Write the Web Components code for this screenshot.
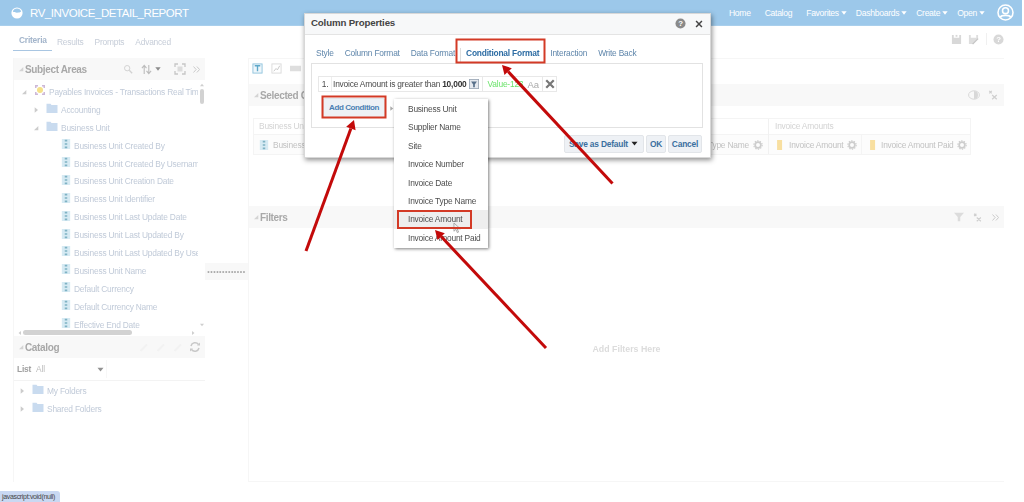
<!DOCTYPE html>
<html>
<head>
<meta charset="utf-8">
<title>RV_INVOICE_DETAIL_REPORT</title>
<style>
  html, body { margin: 0; height: 100%; background: #fff; overflow: hidden; }
</style>
</head>
<body>
<rv-app></rv-app>
<script>
// small icon set, all drawn on a 12x12 box
const ICONS = {
  logo: '<circle cx="6" cy="6" r="5.6" fill="#fff"/><path d="M1.8 4.6c2 1.6 6.4 1.6 8.4 0-.6-1.9-2.2-3-4.2-3s-3.600 1.100-4.200 3z" fill="#9cc8ea"/>',
  user: '<circle cx="6" cy="6" r="5.300" fill="none" stroke="#fff" stroke-width="1.100"/><circle cx="6" cy="4.700" r="2.100" fill="none" stroke="#fff" stroke-width="1.100"/><path d="M2.300 9.300c1-1.700 6.400-1.700 7.400 0" fill="none" stroke="#fff" stroke-width="1.300"/>',
  caret: '<path d="M2 3.500h8l-4 5z" fill="currentColor"/>',
  right: '<path d="M4 2l5 4-5 4z" fill="currentColor"/>',
  corner: '<path d="M9.500 3v6.500H3z" fill="currentColor"/>',
  folder: '<path d="M.5 3V1.800h4L5.500 3h6v8H.5z" fill="#c9dbef"/>',
  subject: '<path d="M1 1h3v1.500H2.500V4H1zM8 1h3v3H9.500V2.500H8zM1 8h1.500v1.500H4V11H1zM9.500 8H11v3H8V9.500h1.500z" fill="#cdb8d8"/><circle cx="6" cy="6" r="3" fill="#f5e08a"/>',
  column: '<rect x="1" y="0" width="10" height="12" fill="#d6eaf3"/><path d="M4.500 1h3v2h-3zM4.500 5h3v2h-3zM4.500 9h3v2h-3z" fill="#7fb2c4"/>',
  measure: '<rect x="2.500" y="0" width="6" height="12" fill="#f8dfa0"/>',
  gear: '<circle cx="6" cy="6" r="3.400" fill="none" stroke="#cdcdcd" stroke-width="2"/><circle cx="6" cy="6" r="5" fill="none" stroke="#cdcdcd" stroke-width="1.400" stroke-dasharray="1.600 1.540"/>',
  search: '<circle cx="5" cy="5" r="3.200" fill="none" stroke="#d2d2d2" stroke-width="1.200"/><path d="M7.500 7.500l3.500 3.500" stroke="#d2d2d2" stroke-width="1.600"/>',
  sort: '<path d="M3.500 11V2M1 4.500l2.500-3 2.500 3M8.500 1v9M6 7.500l2.500 3 2.500-3" fill="none" stroke="#bcbcbc" stroke-width="1.200"/>',
  select: '<path d="M1 4V1h3M8 1h3v3M11 8v3H8M4 11H1V8" fill="none" stroke="#c6c6c6" stroke-width="1.300"/><rect x="3.500" y="3.500" width="5" height="5" fill="#dcdcdc"/>',
  chevrons: '<path d="M2 2l3.500 4L2 10M6.500 2L10 6l-3.500 4" fill="none" stroke="#c6c6c6" stroke-width="1.200"/>',
  save: '<path d="M1 1h2v3h6V1h2v10H1z" fill="#d8d8d8"/><rect x="5" y="1" width="2" height="2" fill="#d8d8d8"/>',
  saveas: '<path d="M1 1h2v3h6V1h2v4L6 11H1z" fill="#dedede"/><path d="M5 11l6-6" stroke="#c6c6c6" stroke-width="1.400"/>',
  help: '<circle cx="6" cy="6" r="5.500" fill="currentColor"/><text x="6" y="9" text-anchor="middle" font-family="Liberation Sans" font-size="8.500" font-weight="700" fill="#fff">?</text>',
  close: '<path d="M2.500 2.500l7 7M9.500 2.500l-7 7" stroke="currentColor" stroke-width="1.800"/>',
  bigx: '<path d="M1.500 1.500l9 9M10.500 1.500l-9 9" stroke="#777" stroke-width="2.600"/>',
  filterbox: '<rect x=".5" y=".5" width="11" height="11" fill="#e4e8ee" stroke="#9aa7b5"/><path d="M2.500 3h7L7 6.500V10H5V6.500z" fill="#58708a"/>',
  prompt: '<rect x="1" y="1" width="10" height="10" fill="#eef6fb" stroke="#8fc3dc"/><path d="M3 3h6M6 3v6" stroke="#5ea8c9" stroke-width="1.500"/>',
  results: '<rect x="1" y="1" width="10" height="10" fill="#fff" stroke="#dadada"/><path d="M3 9l2.500-3 1.500 1.500L9.500 3" fill="none" stroke="#c4c4c4"/>',
  bar: '<rect x="0" y="3" width="12" height="6" fill="#dedede"/>',
  eye: '<ellipse cx="6" cy="6" rx="5.400" ry="4.200" fill="none" stroke="#d8d8d8"/><path d="M6 2v8a4 4 0 0 0 0-8z" fill="#d8d8d8"/>',
  clearx: '<path d="M1.500 1l3 3M4.500 1l-3 3M5 6l5.500 5M10.500 6L5 11" stroke="#cfcfcf" stroke-width="1.500"/>',
  funnel: '<path d="M0 1h12L7.500 6v5h-3V6z" fill="#dcdcdc"/>',
  refresh: '<path d="M2 5a4.200 4.200 0 0 1 7.500-1.500M10 7a4.200 4.200 0 0 1-7.500 1.500" fill="none" stroke="#c8c8c8" stroke-width="1.500"/><path d="M8 4.500h3v-3zM4 7.500H1v3z" fill="#c8c8c8"/>',
  faint: '<path d="M2 9l7-7 1.500 1.500-7 7z" fill="#f2f2f2"/>',
  cursor: '<path d="M1 0v9l2.200-2 1.500 3.500 1.400-.6L4.700 6.500 8 6.300z" fill="#eee" stroke="#8a8a8a" stroke-width=".7"/>'
};

class RvIcon extends HTMLElement {
  constructor () {
    super();
    const size = this.getAttribute('size') || 12;
    this.attachShadow({mode: 'open'}).innerHTML = `
      <style>
        :host { display: inline-flex; flex: none; width: ${size}px; height: ${size}px; }
        svg { width: 100%; height: 100%; display: block; }
      </style>
      <svg viewBox="0 0 12 12">${ICONS[this.getAttribute('name')] || ''}</svg>`;
  }
}
customElements.define('rv-icon', RvIcon);

class RvHeader extends HTMLElement {
  constructor () {
    super();
    const links = [['Home'], ['Catalog'], ['Favorites', 1], ['Dashboards', 1], ['Create', 1], ['Open', 1]];
    this.attachShadow({mode: 'open'}).innerHTML = `
      <style>
        :host { display: flex; align-items: center; height: 26px; width: 1022px; background: #9cc8ea; color: #fff; font: 8.600px "Liberation Sans", sans-serif; letter-spacing: -.3px; box-sizing: border-box; padding: 0 8px 0 11px; border-bottom: 1px solid #a9cfec; }
        .title { font-size: 11.500px; margin-left: 7px; letter-spacing: -.45px; }
        nav { margin-left: auto; display: flex; align-items: center; gap: 14px; }
        span.l { display: flex; align-items: center; gap: 1px; }
        span.l rv-icon { margin-right: -6px; }
        .me { margin-left: 3px; }
      </style>
      <rv-icon name="logo"></rv-icon>
      <span class="title">RV_INVOICE_DETAIL_REPORT</span>
      <nav>
        ${links.map(l => `<span class="l">${l[0]}${l[1] ? '<rv-icon name="caret" size="8"></rv-icon>' : ''}</span>`).join('')}
        <rv-icon class="me" name="user" size="17"></rv-icon>
      </nav>`;
  }
}
customElements.define('rv-header', RvHeader);

class RvTabs extends HTMLElement {
  constructor () {
    super();
    this.attachShadow({mode: 'open'}).innerHTML = `
      <style>
        :host { display: flex; align-items: flex-end; height: 25px; box-sizing: border-box; margin: 0 20px 7px 13px; font: 8.400px "Liberation Sans", sans-serif; letter-spacing: -.2px; color: #c6cdd8; }
        .tab { padding: 0 0 3px; margin-right: 11px; height: 12px; line-height: 12px; }
        .on { color: #a3b5cb; font-weight: 700; border-bottom: 1px solid #a9c6e2; padding: 0 2px 4px 6px; width: 31px; margin-right: 5px; }
        .tools { margin-left: auto; display: flex; align-items: center; gap: 6px; padding-bottom: 6px; }
        .sep { width: 1px; height: 12px; background: #f0f0f0; margin-left: 1.500px; }
      </style>
      <span class="tab on">Criteria</span><span class="tab">Results</span><span class="tab">Prompts</span><span class="tab">Advanced</span>
      <span class="tools"><rv-icon name="save" size="11"></rv-icon><rv-icon name="saveas" size="11"></rv-icon><span class="sep"></span><rv-icon name="help" size="11" style="color:#d8d8d8"></rv-icon></span>`;
  }
}
customElements.define('rv-tabs', RvTabs);

class RvPanel extends HTMLElement {
  constructor () {
    super();
    this.attachShadow({mode: 'open'}).innerHTML = `
      <style>
        :host { display: block; }
        .bar { display: flex; align-items: center; height: 22px; background: #f8f8f8; padding: 0 4px 0 3px; font: 700 10px "Liberation Sans", sans-serif; letter-spacing: -.35px; color: #a8a8a8; }
        .tools { margin-left: auto; display: flex; align-items: center; gap: 6px; }
        rv-icon { color: #d4d4d4; }
      </style>
      <div class="bar"><rv-icon name="corner" size="8"></rv-icon><span>${this.getAttribute('title')}</span><div class="tools"><slot name="tools"></slot></div></div>
      <slot></slot>`;
  }
}
customElements.define('rv-panel', RvPanel);

class RvRow extends HTMLElement {
  constructor () {
    super();
    const indent = this.getAttribute('indent') || 0;
    const twist = this.getAttribute('twist');
    this.attachShadow({mode: 'open'}).innerHTML = `
      <style>
        :host { display: flex; align-items: center; height: 17.900px; padding-left: ${indent}px; white-space: nowrap; color: #c0cad8; font: 8.400px "Liberation Sans", sans-serif; letter-spacing: -.2px; }
        rv-icon { color: #cccccc; }
        .ic { margin: -3px 0 0 6px; }
        .t { margin-left: 3px; }
      </style>
      ${twist ? `<rv-icon name="${twist}" size="8"></rv-icon>` : ''}
      <rv-icon class="ic" name="${this.getAttribute('icon')}" size="${this.getAttribute('isize') || 12}"></rv-icon>
      <span class="t"><slot></slot></span>`;
  }
}
customElements.define('rv-row', RvRow);

class RvSubject extends HTMLElement {
  constructor () {
    super();
    const cols = ['Business Unit Created By', 'Business Unit Created By Username', 'Business Unit Creation Date', 'Business Unit Identifier', 'Business Unit Last Update Date', 'Business Unit Last Updated By', 'Business Unit Last Updated By User', 'Business Unit Name', 'Default Currency', 'Default Currency Name', 'Effective End Date'];
    this.attachShadow({mode: 'open'}).innerHTML = `
      <style>
        :host { display: block; position: relative; }
        .tree { height: 249px; padding: 3px 0 0 0; width: 178px; overflow: hidden; box-sizing: border-box; margin-left: 6px; }
        .hs { height: 7px; margin: 0 9px 0 3px; display: flex; align-items: center; color: #cfcfcf; }
        .thumb { width: 109px; height: 5px; border-radius: 3px; background: #d2d2d2; margin: 0 auto 0 0; }
        .vs { position: absolute; right: 1px; top: 2px; width: 5px; height: 246px; color: #cfcfcf; display: flex; flex-direction: column; align-items: center; }
        .vs b { width: 4px; height: 15px; border-radius: 2px; background: #d2d2d2; margin: 1px 0 auto; }
      </style>
      <div class="tree">
        <rv-row twist="corner" icon="subject">Payables Invoices - Transactions Real Time</rv-row>
        <rv-row indent="12" twist="right" icon="folder">Accounting</rv-row>
        <rv-row indent="12" twist="corner" icon="folder">Business Unit</rv-row>
        ${cols.map(c => `<rv-row indent="35" icon="column" isize="10">${c}</rv-row>`).join('')}
      </div>
      <div class="vs"><rv-icon name="caret" size="6" style="transform:scaleY(-1)"></rv-icon><b></b><rv-icon name="caret" size="6"></rv-icon></div>
      <div class="hs"><rv-icon name="right" size="6" style="transform:scaleX(-1)"></rv-icon><div class="thumb"></div><rv-icon name="right" size="6"></rv-icon></div>`;
  }
}
customElements.define('rv-subject', RvSubject);

class RvCatalog extends HTMLElement {
  constructor () {
    super();
    this.attachShadow({mode: 'open'}).innerHTML = `
      <style>
        :host { display: block; font: 8.400px "Liberation Sans", sans-serif; letter-spacing: -.2px; color: #c0cad8; }
        .list { display: flex; align-items: center; height: 22px; border-bottom: 1px solid #f3f3f3; padding-left: 3px; }
        .list b { color: #a0a0a0; }
        .sel { width: 71px; margin-left: 5px; height: 18px; line-height: 18px; display: flex; align-items: center; justify-content: space-between; color: #bdbdbd; border-right: 1px solid #f7f7f7; padding-right: 1px; box-sizing: border-box; }
        .sel rv-icon { color: #929292; }
        .tree { padding: 1px 0 0 0; margin-left: 1px; }
      </style>
      <div class="list"><b>List</b><div class="sel">All<rv-icon name="caret" size="9"></rv-icon></div></div>
      <div class="tree">
        <rv-row indent="3" twist="right" icon="folder">My Folders</rv-row>
        <rv-row indent="3" twist="right" icon="folder">Shared Folders</rv-row>
      </div>`;
  }
}
customElements.define('rv-catalog', RvCatalog);

class RvColumn extends HTMLElement {
  constructor () {
    super();
    this.attachShadow({mode: 'open'}).innerHTML = `
      <style>
        :host { display: flex; align-items: center; height: 19px; gap: 4px; color: #c2c2c2; font: 8.400px "Liberation Sans", sans-serif; letter-spacing: -.2px; white-space: nowrap; box-sizing: border-box; }
      </style>
      <rv-icon name="${this.getAttribute('icon') || 'column'}" size="10"></rv-icon><slot></slot><rv-icon name="gear" size="10"></rv-icon>`;
  }
}
customElements.define('rv-column', RvColumn);

class RvColumns extends HTMLElement {
  constructor () {
    super();
    this.attachShadow({mode: 'open'}).innerHTML = `
      <style>
        :host { display: flex; width: 718px; margin: 12px 0 0 4px; border: 1px solid #f4f4f4; box-sizing: border-box; font: 8.400px "Liberation Sans", sans-serif; letter-spacing: -.2px; color: #d3d3d3; }
        .g { display: flex; flex-direction: column; }
        .g + .g { border-left: 1px solid #f1f1f1; }
        .a { width: 515px; }
        .b { flex: 1; }
        .h { height: 15px; line-height: 15px; padding-left: 5px; border-bottom: 1px solid #f4f4f4; }
        .b .h { padding-left: 6px; }
        .c { display: flex; justify-content: space-between; padding: 0 5px; background: #fcfcfc; }
        .b .c { padding: 0; justify-content: flex-start; }
        .b rv-column { padding-left: 6px; width: 92px; }
        .b rv-column + rv-column { border-left: 1px solid #f4f4f4; width: 109px; gap: 3px; }
      </style>
      <div class="g a"><div class="h">Business Unit</div><div class="c">
        <rv-column>Business Unit</rv-column><rv-column>Supplier Name</rv-column><rv-column>Invoice Type Name</rv-column>
      </div></div>
      <div class="g b"><div class="h">Invoice Amounts</div><div class="c">
        <rv-column icon="measure">Invoice Amount</rv-column><rv-column icon="measure">Invoice Amount Paid</rv-column>
      </div></div>`;
  }
}
customElements.define('rv-columns', RvColumns);

class RvDialog extends HTMLElement {
  constructor () {
    super();
    this.attachShadow({mode: 'open'}).innerHTML = `
      <style>
        :host { display: block; position: absolute; left: 304px; top: 13px; width: 407px; height: 145px; box-sizing: border-box; background: #fff; border: 1px solid #d8d8d8; box-shadow: 1px 2px 5px rgba(0,0,0,.45); font: 8.400px "Liberation Sans", sans-serif; letter-spacing: -.2px; color: #4a4a4a; }
        .head { display: flex; align-items: center; gap: 8px; height: 19px; padding: 0 6px 1px; background: #f7f8f9; border-bottom: 1px solid #e4e4e4; font-size: 9.700px; letter-spacing: -.15px; font-weight: 700; color: #444; }
        .head span { margin: 0 auto 2px 0; }
        .tabs { display: flex; align-items: flex-end; height: 28px; padding-left: 11px; color: #5f86ab; box-sizing: border-box; }
        .tabs span { margin-right: 11px; padding-bottom: 5px; }
        .tabs .on { font-weight: 700; color: #2e6da4; margin: 0 11px 0 -6px; padding-left: 5px; border-left: 1px solid #ddd; }
        .body { margin: 0 7px 0 6px; height: 65px; border: 1px solid #e2e2e2; box-sizing: border-box; padding: 12px 6px 0; }
        .cond { display: flex; align-items: center; width: 239px; height: 16px; border: 1px solid #e8e8e8; box-sizing: border-box; }
        .cond > * { flex: none; }
        .n { width: 12px; text-align: center; border-right: 1px solid #eee; line-height: 14px; }
        .cond .txt { margin-left: 1px; }
        .cond b { margin-left: 2px; color: #333; }
        .cond rv-icon.f { margin-left: 2px; }
        .cond .v { margin-left: 3px; padding-left: 5px; border-left: 1px solid #e8e8e8; color: #6be36b; line-height: 14px; width: 38px; }
        .cond .aa { color: #aaa; font-size: 9.500px; width: 13px; margin-left: 2px; }
        .cond .x { margin-left: 1px; padding: 2px 0 2px 2px; border-left: 1px solid #e8e8e8; width: 10px; height: 10px; }
        .act { display: flex; align-items: center; margin: 6px 0 0 5px; gap: 3px; color: #aaa; }
        .btn { display: inline-flex; align-items: center; justify-content: center; height: 18px; box-sizing: border-box; border: 1px solid #e2e5e9; border-radius: 2px; background: #eef1f5; font-weight: 700; color: #3a6f9f; padding-bottom: 1px; }
        .add { width: 62px; height: 20px; padding-bottom: 2px; font-size: 8px; letter-spacing: -.4px; color: #4a7fb3; }
        .foot { display: flex; justify-content: flex-end; gap: 2px; padding: 7px 8px 0 0; }
      </style>
      <div class="head"><span>Column Properties</span><rv-icon name="help" size="11" style="color:#8a8a8a"></rv-icon><rv-icon name="close" size="10" style="color:#444"></rv-icon></div>
      <div class="tabs"><span>Style</span><span>Column Format</span><span>Data Format</span><span class="on">Conditional Format</span><span>Interaction</span><span>Write Back</span></div>
      <div class="body">
        <div class="cond"><span class="n">1.</span><span class="txt">Invoice Amount is greater than</span><b>10,000</b><rv-icon class="f" name="filterbox" size="10"></rv-icon><span class="v">Value-123</span><span class="aa">Aa</span><rv-icon class="x" name="bigx" size="10"></rv-icon></div>
        <div class="act"><span class="btn add">Add Condition</span><rv-icon name="right" size="7"></rv-icon></div>
      </div>
      <div class="foot"><span class="btn" style="width:80px">Save as Default&nbsp;<rv-icon name="caret" size="9" style="color:#222"></rv-icon></span><span class="btn" style="width:20px">OK</span><span class="btn" style="width:34px">Cancel</span></div>`;
  }
}
customElements.define('rv-dialog', RvDialog);

class RvMenu extends HTMLElement {
  constructor () {
    super();
    const items = ['Business Unit', 'Supplier Name', 'Site', 'Invoice Number', 'Invoice Date', 'Invoice Type Name', 'Invoice Amount', 'Invoice Amount Paid'];
    this.attachShadow({mode: 'open'}).innerHTML = `
      <style>
        :host { display: block; position: absolute; left: 394px; top: 99px; width: 94px; height: 149px; box-sizing: border-box; padding-top: 1px; background: #fff; box-shadow: 1px 1px 3px rgba(0,0,0,.5); font: 8.400px "Liberation Sans", sans-serif; letter-spacing: -.2px; color: #4e4e4e; }
        div { height: 18.400px; line-height: 18.400px; padding-left: 14px; white-space: nowrap; }
        .hi { background: #eeeeee; }
      </style>
      ${items.map(i => `<div class="${i === 'Invoice Amount' ? 'hi' : ''}">${i}</div>`).join('')}`;
  }
}
customElements.define('rv-menu', RvMenu);

// red callouts drawn on top of the captured page
class RvCallouts extends HTMLElement {
  constructor () {
    super();
    const arrow = (x1, y1, x2, y2) => {
      const a = Math.atan2(y2 - y1, x2 - x1);
      const len = 9, w = 5;
      const bx = x2 - Math.cos(a) * len, by = y2 - Math.sin(a) * len;
      const nx = -Math.sin(a) * w, ny = Math.cos(a) * w;
      return `<path d="M${x1} ${y1}L${bx} ${by}" stroke="#c30a0a" stroke-width="3" fill="none"/>` +
        `<path d="M${x2} ${y2}L${bx + nx} ${by + ny}L${bx - nx} ${by - ny}z" fill="#c30a0a"/>`;
    };
    this.attachShadow({mode: 'open'}).innerHTML = `
      <style>
        :host { display: block; position: absolute; left: 0; top: 0; width: 1024px; height: 502px; pointer-events: none; }
        svg { display: block; }
        rect { fill: none; stroke: #d33a26; stroke-width: 2; }
      </style>
      <svg width="1024" height="502">
        <rect x="456.500" y="39.500" width="88" height="23"/>
        <rect x="322.500" y="96.500" width="63" height="21"/>
        <rect x="398" y="211" width="73" height="17"/>
        ${arrow(612.500, 183.500, 502, 65)}
        ${arrow(306, 251, 354, 120)}
        ${arrow(546, 348, 435, 230)}
      </svg>`;
  }
}
customElements.define('rv-callouts', RvCallouts);

class RvApp extends HTMLElement {
  constructor () {
    super();
    this.attachShadow({mode: 'open'}).innerHTML = `
      <style>
        :host { display: block; position: relative; width: 1024px; height: 502px; overflow: hidden; font: 8.400px "Liberation Sans", sans-serif; }
        .page { filter: blur(.55px); height: 502px; }
        .front { filter: blur(.4px); position: absolute; inset: 0; }
        .main { display: grid; grid-template-columns: 192px 43px 756px; margin: 0 20px 0 13px; height: 424px; }
        .left { border-left: 1px solid #f6f6f6; }
        .split { display: flex; align-items: center; height: 17px; margin-top: 205px; background: #f8f8f8; color: #aaa; font-size: 7px; overflow: hidden; white-space: nowrap; justify-content: center; letter-spacing: .5px; }
        .right { border-left: 1px solid #f6f6f6; border-bottom: 1px solid #f6f6f6; border-top: 1px solid #f6f6f6; }
        .tb { display: flex; gap: 8px; height: 25px; box-sizing: border-box; padding: 4px 0 0 3px; }
        .sel { height: 122px; }
        .empty { height: 230px; display: flex; align-items: center; justify-content: center; color: #dcdcdc; font: 700 8.800px "Liberation Sans", sans-serif; padding-top: 11px; box-sizing: border-box; }
        .status { position: absolute; left: 0; bottom: 0; width: 60px; height: 11px; line-height: 11px; background: #c9d8f2; color: #444; font-size: 7px; letter-spacing: -.33px; padding-left: 2px; box-sizing: border-box; border-radius: 0 3px 0 0; white-space: nowrap; }
      </style>
      <div class="page">
        <rv-header></rv-header>
        <rv-tabs></rv-tabs>
        <div class="main">
          <div class="left">
            <rv-panel title="Subject Areas">
              <rv-icon slot="tools" name="search" size="10"></rv-icon>
              <rv-icon slot="tools" name="sort" size="11" style="margin-left:2px"></rv-icon>
              <rv-icon slot="tools" name="caret" size="8" style="color:#8c8c8c;margin:0 6px 0 -4px"></rv-icon>
              <rv-icon slot="tools" name="select" size="12"></rv-icon>
              <rv-icon slot="tools" name="chevrons" size="9"></rv-icon>
              <rv-subject></rv-subject>
            </rv-panel>
            <rv-panel title="Catalog">
              <rv-icon slot="tools" name="faint" size="11"></rv-icon>
              <rv-icon slot="tools" name="faint" size="11"></rv-icon>
              <rv-icon slot="tools" name="faint" size="11"></rv-icon>
              <rv-icon slot="tools" name="refresh" size="12"></rv-icon>
              <rv-catalog></rv-catalog>
            </rv-panel>
          </div>
          <div class="split">•••••••••••••</div>
          <div class="right">
            <div class="tb"><rv-icon name="prompt" size="11"></rv-icon><rv-icon name="results" size="11"></rv-icon><rv-icon name="bar" size="11"></rv-icon></div>
            <div class="sel"><rv-panel title="Selected Columns">
              <rv-icon slot="tools" name="eye" size="12"></rv-icon>
              <rv-icon slot="tools" name="clearx" size="10" style="margin:0 2px 0 2px"></rv-icon>
              <rv-columns></rv-columns>
            </rv-panel></div>
            <rv-panel title="Filters">
              <rv-icon slot="tools" name="funnel" size="10"></rv-icon>
              <rv-icon slot="tools" name="clearx" size="9" style="margin-left:3px"></rv-icon>
              <rv-icon slot="tools" name="chevrons" size="9" style="margin-left:3px"></rv-icon>
              <div class="empty">Add Filters Here</div>
            </rv-panel>
          </div>
        </div>
      </div>
      <div class="status">javascript:void(null)</div>
      <div class="front">
        <rv-dialog></rv-dialog>
        <rv-menu></rv-menu>
        <rv-icon name="cursor" size="11" style="position:absolute;left:453px;top:223px"></rv-icon>
        <rv-callouts></rv-callouts>
      </div>`;
  }
}
customElements.define('rv-app', RvApp);
</script>
</body>
</html>
